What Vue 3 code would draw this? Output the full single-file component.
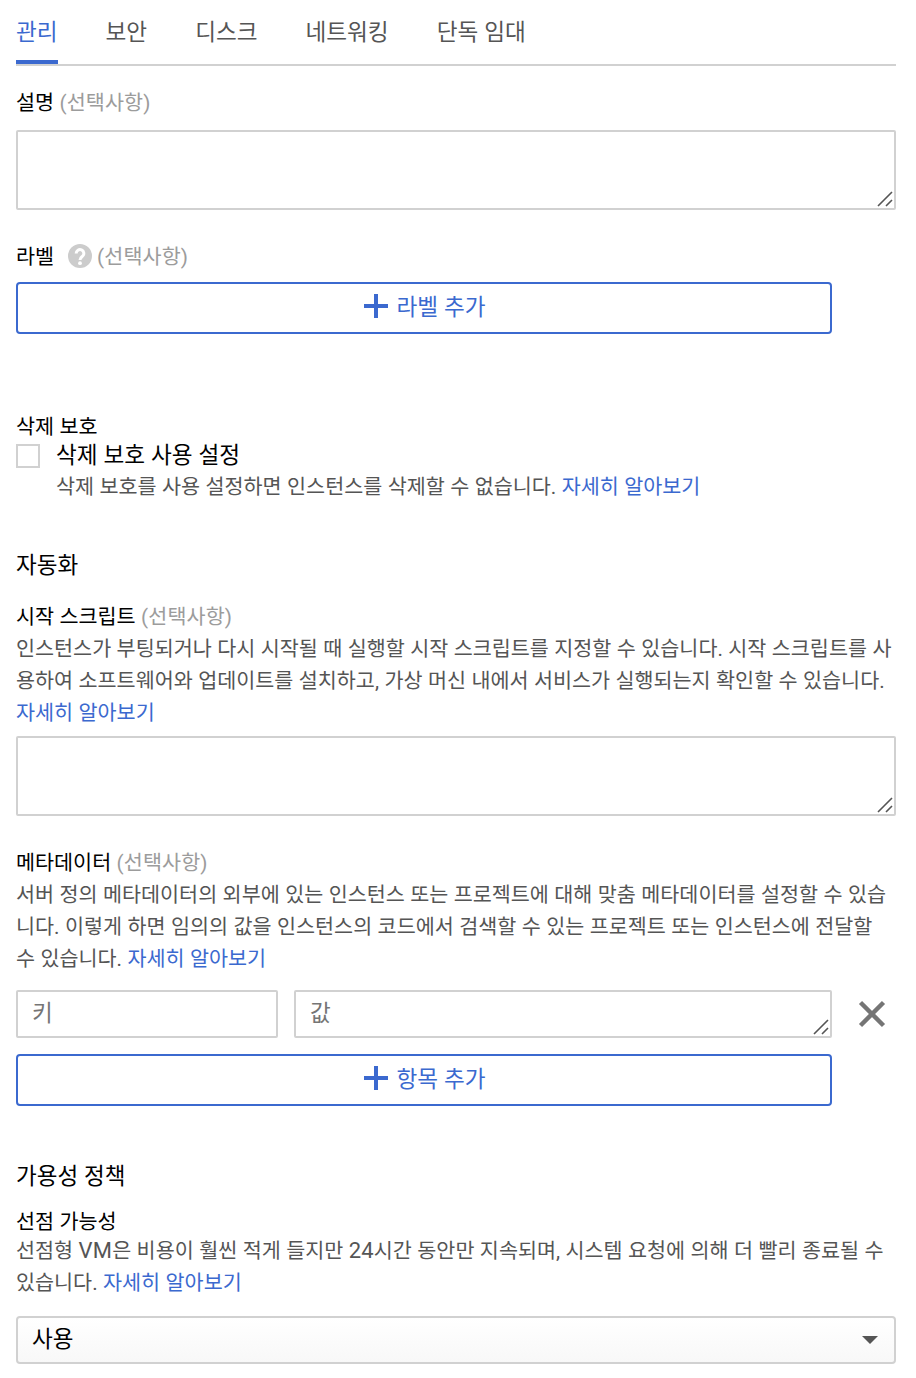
<template>
  <div class="page">
    <nav class="tabs">
      <a
        v-for="(tab, index) in tabs"
        :key="'tab-' + index"
        class="tab"
        :class="{ active: index === activeTab }"
        @click="activeTab = index"
      >{{ tab }}</a>
    </nav>

    <!-- Description -->
    <section class="field description">
      <label class="label">설명 <span class="optional">(선택사항)</span></label>
      <div class="textarea-wrap">
        <textarea class="box"></textarea>
        <svg class="grip" width="16" height="16" viewBox="0 0 16 16"><path d="M1 15L15 1M9 15L15 9" /></svg>
      </div>
    </section>

    <!-- Labels -->
    <section class="field labels">
      <div class="label label-help">
        <span>라벨</span>
        <svg class="help" width="24" height="24" viewBox="0 0 24 24">
          <circle cx="12" cy="12" r="12" fill="#ccc" />
          <path d="M8.2 9.4a3.8 3.8 0 1 1 6.3 2.8c-1.5 1.2-2.5 1.8-2.5 3.8" fill="none" stroke="#fff" stroke-width="3" />
          <circle cx="12" cy="19.2" r="1.9" fill="#fff" />
        </svg>
        <span class="optional">(선택사항)</span>
      </div>
      <button class="add-button">
        <svg width="24" height="24" viewBox="0 0 24 24"><path d="M12 0V24M0 12H24" /></svg>
        <span>라벨 추가</span>
      </button>
    </section>

    <!-- Deletion protection -->
    <section class="field protection">
      <div class="label">삭제 보호</div>
      <div class="check-row">
        <span class="checkbox"></span>
        <div>
          <div class="check-title">삭제 보호 사용 설정</div>
          <p class="text">삭제 보호를 사용 설정하면 인스턴스를 삭제할 수 없습니다. <a class="link">자세히 알아보기</a></p>
        </div>
      </div>
    </section>

    <!-- Automation -->
    <h2 class="heading automation">자동화</h2>
    <section class="field startup">
      <label class="label">시작 스크립트 <span class="optional">(선택사항)</span></label>
      <p class="text">
        인스턴스가 부팅되거나 다시 시작될 때 실행할 시작 스크립트를 지정할 수 있습니다. 시작 스크립트를 사<br />용하여 소프트웨어와 업데이트를 설치하고, 가상 머신 내에서 서비스가 실행되는지 확인할 수 있습니다.<br /><a class="link">자세히 알아보기</a>
      </p>
      <div class="textarea-wrap">
        <textarea class="box"></textarea>
        <svg class="grip" width="16" height="16" viewBox="0 0 16 16"><path d="M1 15L15 1M9 15L15 9" /></svg>
      </div>
    </section>

    <!-- Metadata -->
    <section class="field metadata">
      <label class="label">메타데이터 <span class="optional">(선택사항)</span></label>
      <p class="text">
        서버 정의 메타데이터의 외부에 있는 인스턴스 또는 프로젝트에 대해 맞춤 메타데이터를 설정할 수 있습<br />니다. 이렇게 하면 임의의 값을 인스턴스의 코드에서 검색할 수 있는 프로젝트 또는 인스턴스에 전달할<br />수 있습니다. <a class="link">자세히 알아보기</a>
      </p>
      <div class="meta-row">
        <input class="box key-input" placeholder="키" />
        <div class="textarea-wrap value-wrap">
          <textarea class="box value-input" placeholder="값"></textarea>
          <svg class="grip" width="16" height="16" viewBox="0 0 16 16"><path d="M1 15L15 1M9 15L15 9" /></svg>
        </div>
        <svg class="remove" width="28" height="28" viewBox="0 0 28 28"><path d="M2.5 2.5L25.5 25.5M25.5 2.5L2.5 25.5" /></svg>
      </div>
      <button class="add-button">
        <svg width="24" height="24" viewBox="0 0 24 24"><path d="M12 0V24M0 12H24" /></svg>
        <span>항목 추가</span>
      </button>
    </section>

    <!-- Availability policy -->
    <h2 class="heading availability">가용성 정책</h2>
    <section class="field preempt">
      <div class="label">선점 가능성</div>
      <p class="text">
        선점형 <span class="latin">VM</span>은 비용이 훨씬 적게 들지만 <span class="latin">24</span>시간 동안만 지속되며, 시스템 요청에 의해 더 빨리 종료될 수<br />있습니다. <a class="link">자세히 알아보기</a>
      </p>
      <div class="select">
        <span>사용</span>
        <svg width="16" height="8" viewBox="0 0 16 8"><path d="M0 0H16L8 8Z" fill="#555" /></svg>
      </div>
    </section>
  </div>
</template>

<script setup>
import { ref } from 'vue'

const tabs = ['관리', '보안', '디스크', '네트워킹', '단독 임대']
const activeTab = ref(0)
</script>

<style>
body {
  background: #fff;
}
</style>

<style scoped>
.page {
  box-sizing: border-box;
  width: 916px;
  height: 1378px;
  padding: 0 20px 0 16px;
  font-family: Roboto, "Noto Sans CJK KR", sans-serif;
  font-size: 20.7px;
  line-height: 32px;
  word-spacing: 0.3px;
  color: #000;
}

.tabs {
  display: flex;
  gap: 48px;
  box-sizing: border-box;
  height: 66px;
  border-bottom: 2px solid #d1d1d1;
  font-size: 22.6px;
}

.tab {
  box-sizing: border-box;
  height: 64px;
  padding-top: 17px;
  color: #555;
  white-space: nowrap;
  cursor: pointer;
}

.tab.active {
  color: #3b69cf;
  border-bottom: 4px solid #3b69cf;
}

.label {
  display: block;
  height: 32px;
  line-height: 34px;
}

.label-help {
  display: flex;
  align-items: center;
}

.label-help span {
  padding-top: 2px;
}

.help {
  margin: 0 5px 0 14px;
}

.optional {
  color: #9c9c9c;
  letter-spacing: 0.1px;
}

.description {
  padding-top: 20px;
}

.description .textarea-wrap {
  margin-top: 12px;
}

.textarea-wrap {
  position: relative;
  height: 80px;
}

.box {
  display: block;
  box-sizing: border-box;
  width: 100%;
  height: 100%;
  margin: 0;
  padding: 5px 14px 7px;
  border: 2px solid #d1d1d1;
  border-radius: 2px;
  outline: none;
  resize: none;
  overflow: hidden;
  background: #fff;
  font-family: inherit;
  font-size: 22.5px;
  line-height: 32px;
}

.box::placeholder {
  color: #757575;
}

.grip {
  position: absolute;
  right: 3px;
  bottom: 3px;
  fill: none;
  stroke: #555;
  stroke-width: 1.6;
}

.labels {
  padding-top: 30px;
}

.labels .add-button {
  margin-top: 10px;
}

.add-button {
  display: flex;
  align-items: center;
  justify-content: center;
  gap: 8px;
  box-sizing: border-box;
  width: 816px;
  height: 52px;
  padding: 0 0 4px 2px;
  border: 2px solid #3b69cf;
  border-radius: 4px;
  background: #fff;
  color: #3b69cf;
  font-family: inherit;
  font-size: 22.6px;
  line-height: 32px;
  word-spacing: 0.4px;
}

.add-button span {
  padding-top: 4px;
}

.add-button path {
  stroke: #3b69cf;
  stroke-width: 4;
}

.protection {
  padding-top: 76px;
}

.check-row {
  display: flex;
  gap: 16px;
}

.checkbox {
  box-sizing: border-box;
  width: 24px;
  height: 24px;
  margin-top: 2px;
  border: 2px solid #d1d1d1;
}

.check-title {
  height: 28px;
  font-size: 22.6px;
  line-height: 28px;
}

.text {
  margin: 0;
  padding-top: 1px;
  margin-bottom: -1px;
  color: #555;
  white-space: nowrap;
}

.latin {
  font-size: 22px;
  letter-spacing: 0.2px;
}

.link {
  color: #3b69cf;
  cursor: pointer;
}

.heading {
  margin: 0;
  font-size: 22.5px;
  font-weight: 400;
  line-height: 32px;
}

.automation {
  padding-top: 47px;
}

.startup {
  padding-top: 19px;
}

.startup .textarea-wrap {
  margin-top: 8px;
}

.metadata {
  padding-top: 30px;
}

.meta-row {
  display: flex;
  align-items: center;
  gap: 16px;
  height: 48px;
  margin: 16px 0;
}

.key-input {
  width: 262px;
}

.value-wrap {
  width: 538px;
  height: 48px;
}

.remove {
  margin-left: 10px;
  fill: none;
  stroke: #757575;
  stroke-width: 4.4;
}

.availability {
  padding-top: 54px;
}

.preempt {
  padding-top: 13px;
}

.preempt .label {
  height: 29px;
}

.select {
  display: flex;
  align-items: center;
  justify-content: space-between;
  box-sizing: border-box;
  height: 48px;
  margin-top: 18px;
  padding: 0 16px 0 14px;
  border: 2px solid #d1d1d1;
  border-radius: 4px;
  background: linear-gradient(#fff, #f8f8f8);
  font-size: 22.5px;
}

.select span {
  padding-bottom: 2px;
}
</style>
